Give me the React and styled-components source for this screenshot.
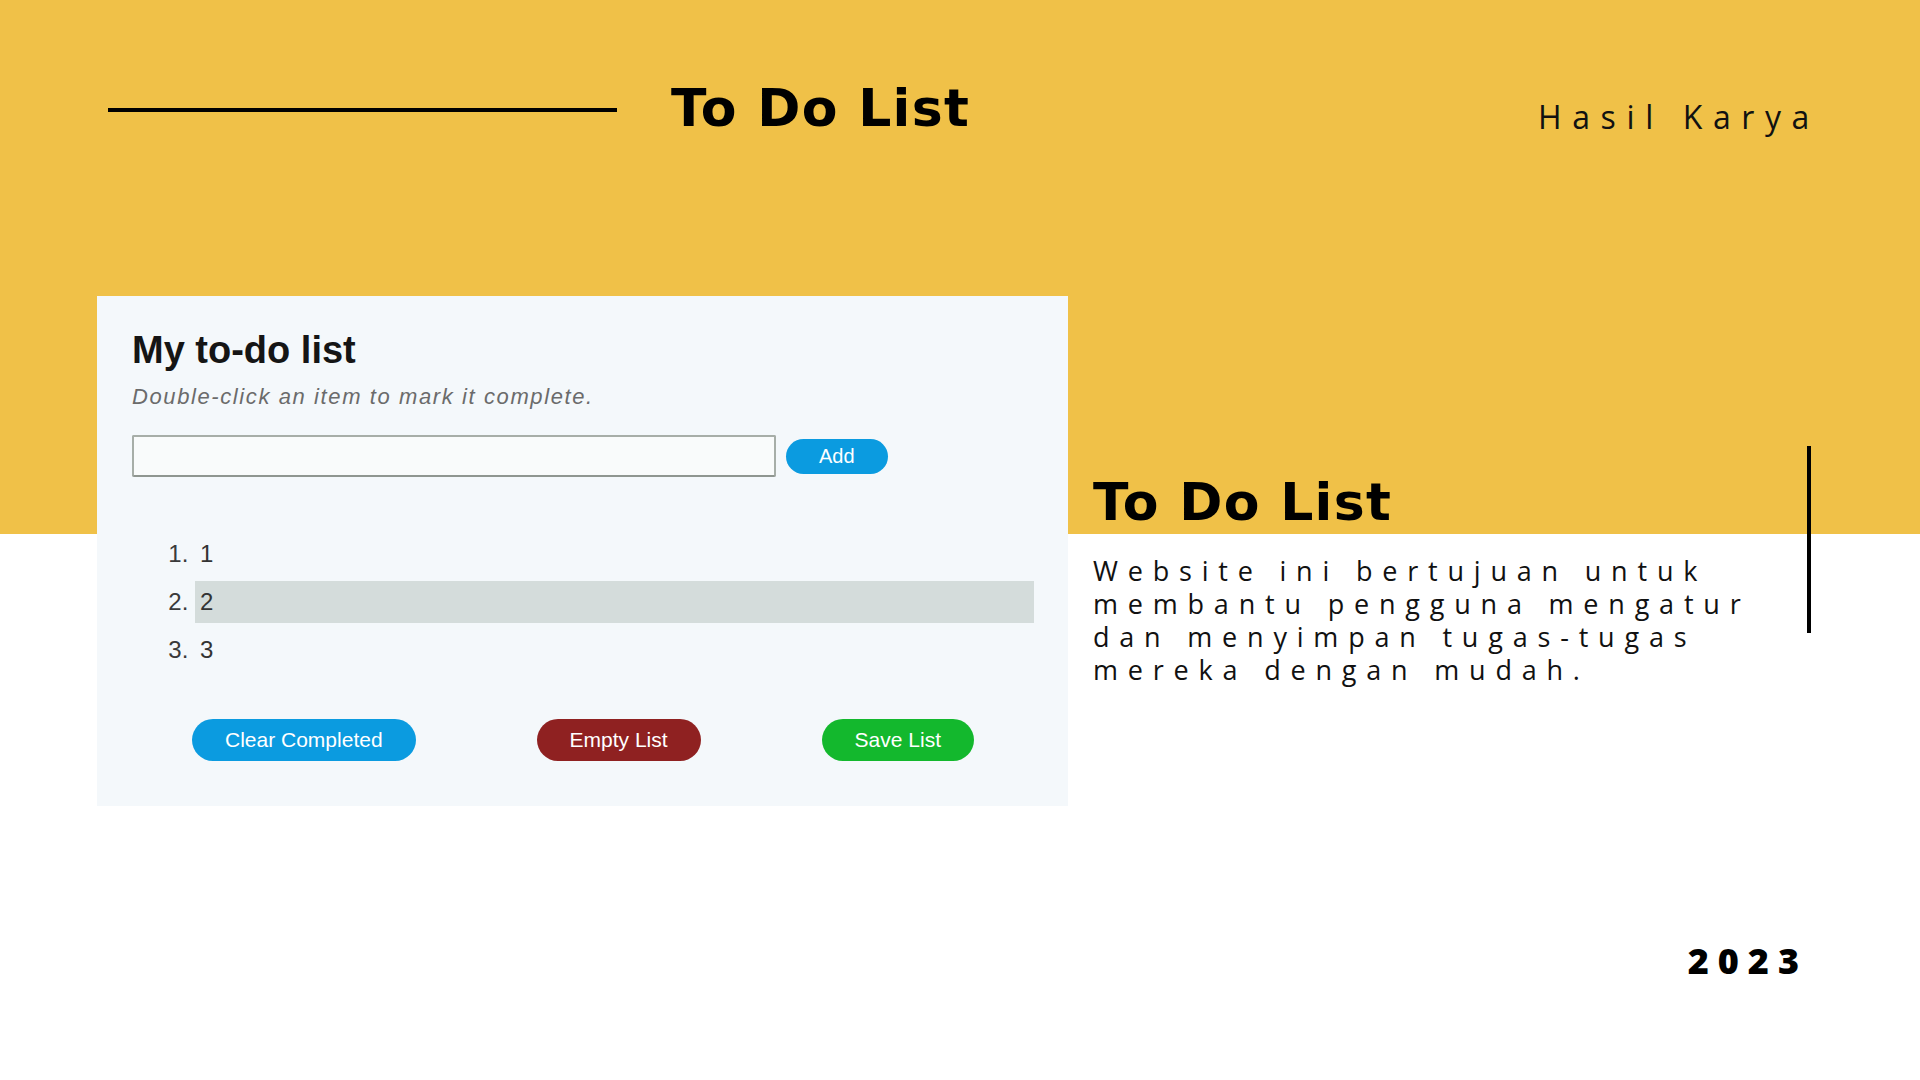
import React from "react";
import styled, { createGlobalStyle } from "styled-components";

const Global = createGlobalStyle`
  html, body { margin: 0; padding: 0; }
  body { font-family: "Liberation Sans", Arial, sans-serif; }
  * { box-sizing: border-box; }
`;

const Page = styled.div`
  width: 1920px;
  height: 1080px;
  overflow: hidden;
  background: linear-gradient(#f0c148 0, #f0c148 534px, #ffffff 534px);
  display: flex;
  flex-direction: column;
`;

const Header = styled.header`
  height: 296px;
  padding: 82px 100px 0 108px;
  display: flex;
  align-items: flex-start;
`;

const HRule = styled.div`
  width: 509px;
  height: 4px;
  margin-top: 26px;
  background: #000;
`;

const Title = styled.h1`
  margin: 0 0 0 ${(p) => p.$indent || 0}px;
  font-family: "DejaVu Sans", "Liberation Sans", sans-serif;
  font-weight: 700;
  font-size: 52px;
  line-height: 1;
  letter-spacing: 1.3px;
  color: #000;
`;

const Kicker = styled.div`
  margin-left: auto;
  margin-top: 19px;
  font-family: "Open Sans", "Noto Sans", sans-serif;
  font-weight: 400;
  font-size: 32px;
  line-height: 1;
  letter-spacing: 10.6px;
  color: #111;
`;

const Main = styled.main`
  display: flex;
  align-items: flex-start;
  padding-left: 97px;
  gap: 25px;
`;

const Card = styled.section`
  width: 971px;
  background: #f4f8fb;
  padding: 35px 34px 45px 35px;
  font-family: "Liberation Sans", Arial, sans-serif;
`;

const CardTitle = styled.h2`
  margin: 0;
  font-size: 38px;
  font-weight: 700;
  line-height: 1;
  color: #151515;
`;

const Hint = styled.p`
  margin: 17px 0 0;
  font-size: 22px;
  font-style: italic;
  line-height: 1;
  letter-spacing: 1.6px;
  color: #6b6b6b;
`;

const InputRow = styled.div`
  margin-top: 27px;
  display: flex;
  align-items: center;
  gap: 10px;
`;

const TextInput = styled.input`
  width: 644px;
  height: 42px;
  border: 2px solid #a7aea8;
  border-bottom-color: #8f9690;
  border-radius: 2px;
  background: #f9fbfb;
  padding: 0 8px;
  font-size: 20px;
  font-family: "Liberation Sans", Arial, sans-serif;
  outline: none;
`;

const Pill = styled.button`
  height: ${(p) => (p.$small ? 35 : 42)}px;
  padding: 0 33px;
  border: none;
  border-radius: 21px;
  background: ${(p) => p.$bg};
  color: #fff;
  font-family: "Liberation Sans", Arial, sans-serif;
  font-size: ${(p) => (p.$small ? 20 : 21)}px;
  cursor: pointer;
`;

const List = styled.ol`
  margin: 56px 0 0;
  padding-left: 63px;
  display: flex;
  flex-direction: column;
  gap: 6px;
  font-size: 24px;
  color: #333;
`;

const Item = styled.li`
  height: 42px;
  line-height: 42px;
  padding: 0 5px;
  background: ${(p) => (p.$active ? "#d4dcdb" : "transparent")};
  &::marker { color: #3a3a3a; }
`;

const Actions = styled.div`
  margin-top: 48px;
  padding-left: 60px;
  display: flex;
  gap: 121px;
`;

const Side = styled.aside`
  display: flex;
  align-items: flex-start;
`;

const Info = styled.div`
  width: 714px;
  padding-top: 180px;
`;

const Body = styled.p`
  margin: 26px 0 0;
  font-family: "Open Sans", "Noto Sans", sans-serif;
  font-weight: 400;
  font-size: 27px;
  line-height: 33px;
  letter-spacing: 9.8px;
  color: #111;
`;

const VRule = styled.div`
  width: 4px;
  height: 187px;
  margin-top: 150px;
  background: #000;
`;

const Footer = styled.footer`
  margin-top: 137px;
  display: flex;
  justify-content: flex-end;
  padding-right: 112px;
`;

const Year = styled.div`
  font-family: "Open Sans", "DejaVu Sans", sans-serif;
  font-weight: 800;
  font-size: 36px;
  line-height: 1;
  letter-spacing: 9px;
  color: #000;
`;

export default function App() {
  return (
    <>
      <Global />
      <Page>
        <Header>
          <HRule />
          <Title $indent={54}>To Do List</Title>
          <Kicker>Hasil Karya</Kicker>
        </Header>
        <Main>
          <Card>
            <CardTitle>My to-do list</CardTitle>
            <Hint>Double-click an item to mark it complete.</Hint>
            <InputRow>
              <TextInput type="text" />
              <Pill $small $bg="#0b9be0">Add</Pill>
            </InputRow>
            <List>
              <Item>1</Item>
              <Item $active>2</Item>
              <Item>3</Item>
            </List>
            <Actions>
              <Pill $bg="#0b9be0">Clear Completed</Pill>
              <Pill $bg="#8f2121">Empty List</Pill>
              <Pill $bg="#13b82d">Save List</Pill>
            </Actions>
          </Card>
          <Side>
            <Info>
              <Title>To Do List</Title>
              <Body>
                Website ini bertujuan untuk
                <br />
                membantu pengguna mengatur
                <br />
                dan menyimpan tugas-tugas
                <br />
                mereka dengan mudah.
              </Body>
            </Info>
            <VRule />
          </Side>
        </Main>
        <Footer>
          <Year>2023</Year>
        </Footer>
      </Page>
    </>
  );
}
